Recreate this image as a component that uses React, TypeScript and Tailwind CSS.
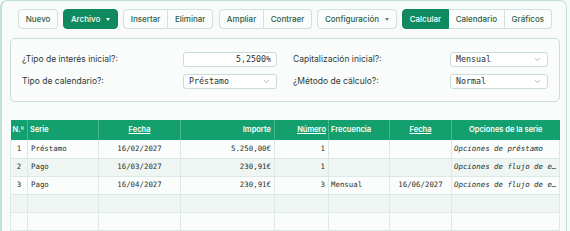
import { ChevronDown } from "lucide-react";

const sans = { fontFamily: "Inter, 'Noto Sans', sans-serif" };
const mono = { fontFamily: "'DejaVu Sans Mono', monospace" };

const rows = [
  { n: "1", serie: "Préstamo", fecha: "16/02/2027", importe: "5.250,00€", numero: "1", frec: "", fecha2: "", opc: "Opciones de préstamo" },
  { n: "2", serie: "Pago", fecha: "16/03/2027", importe: "230,91€", numero: "1", frec: "", fecha2: "", opc: "Opciones de flujo de efectivo" },
  { n: "3", serie: "Pago", fecha: "16/04/2027", importe: "230,91€", numero: "3", frec: "Mensual", fecha2: "16/06/2027", opc: "Opciones de flujo de efectivo" },
  null,
  null,
  null,
];

function Caret({ light }: { light?: boolean }) {
  return (
    <svg width="4" height="3" viewBox="0 0 4 3" className={light ? "fill-white" : "fill-[#6b7c76]"}>
      <path d="M0 0h4L2 3z" />
    </svg>
  );
}

function Btn({ label, primary, caret, first, last, single }: { label: string; primary?: boolean; caret?: boolean; first?: boolean; last?: boolean; single?: boolean }) {
  const rounded = single ? "rounded-[4px]" : first ? "rounded-l-[4px]" : last ? "rounded-r-[4px]" : "";
  const border = single || first ? "border" : "border border-l-0";
  const tone = primary
    ? "bg-[#0f8a5f] border-[#0f8a5f] text-white"
    : "bg-[#fbfdfc] border-[#cfe2db] text-[#2c5d4b]";
  return (
    <button className={`flex h-[20px] items-center gap-[6px] px-[6.75px] text-[8px] font-medium ${border} ${rounded} ${tone}`}>
      {label}
      {caret && <Caret light={primary} />}
    </button>
  );
}

function Field({ label, value, select, right }: { label: string; value: string; select?: boolean; right?: boolean }) {
  return (
    <div className="flex h-[15px] items-center justify-between">
      <span className="text-[8.5px] text-[#2f3a36]">{label}</span>
      <div
        className={`flex h-[15px] items-center rounded-[3px] border border-[#c9ddd6] bg-white px-[5px] text-[8.3px] text-[#2b2f2e] ${right ? "w-[98px]" : "w-[94px]"} ${select ? "justify-between" : "justify-end"}`}
        style={mono}
      >
        <span>{value}</span>
        {select && <ChevronDown className="h-[9px] w-[9px] text-[#7a8a84]" strokeWidth={1.6} />}
      </div>
    </div>
  );
}

export default function App() {
  return (
    <div className="h-[231px] w-[570px] overflow-hidden bg-[#f6faf9]" style={sans}>
      <div className="h-[240px] w-[567px] rounded-[7px] border border-l-2 border-[#bfe0d5] bg-[#f8fbfa] pl-[8px] pt-[8px]">
        <div className="flex items-center gap-[5px] pl-[8px]">
          <Btn label="Nuevo" single />
          <Btn label="Archivo" primary caret single />
          <div className="flex">
            <Btn label="Insertar" first />
            <Btn label="Eliminar" last />
          </div>
          <div className="ml-[1px] flex">
            <Btn label="Ampliar" first />
            <Btn label="Contraer" last />
          </div>
          <Btn label="Configuración" caret single />
          <div className="flex">
            <Btn label="Calcular" primary first />
            <Btn label="Calendario" />
            <Btn label="Gráficos" last />
          </div>
        </div>

        <div className="mt-[9px] grid w-[550px] grid-cols-2 gap-x-[16px] gap-y-[7px] rounded-[5px] border border-[#c3e0d6] bg-[#f9fcfb] px-[11px] pb-[12px] pt-[13px]">
          <Field label="¿Tipo de interés inicial?:" value="5,2500%" />
          <Field label="Capitalización inicial?:" value="Mensual" select right />
          <Field label="Tipo de calendario?:" value="Préstamo" select />
          <Field label="¿Método de cálculo?:" value="Normal" select right />
        </div>

        <table className="mt-[18px] w-[549px] table-fixed border-collapse">
          <colgroup>
            <col className="w-[17px]" />
            <col className="w-[71px]" />
            <col className="w-[82px]" />
            <col className="w-[94px]" />
            <col className="w-[54px]" />
            <col className="w-[61px]" />
            <col className="w-[62px]" />
            <col className="w-[108px]" />
          </colgroup>
          <thead>
            <tr className="h-[20px] bg-[#13a06e] text-[7.5px] text-white">
              <th className="border-r border-[#45b98e] px-[2px] text-left font-semibold">N.º</th>
              <th className="border-r border-[#45b98e] px-[2px] text-left font-semibold">Serie</th>
              <th className="border-r border-[#45b98e] px-[2px] text-center font-semibold underline">Fecha</th>
              <th className="border-r border-[#45b98e] px-[3px] text-right font-semibold">Importe</th>
              <th className="border-r border-[#45b98e] px-[2px] text-right font-semibold underline">Número</th>
              <th className="border-r border-[#45b98e] px-[2px] text-left font-semibold">Frecuencia</th>
              <th className="border-r border-[#45b98e] px-[2px] text-center font-semibold underline">Fecha</th>
              <th className="px-[2px] text-center font-semibold">Opciones de la serie</th>
            </tr>
          </thead>
          <tbody className="text-[7.4px] text-[#2b2f2e]" style={mono}>
            {rows.map((r, i) => (
              <tr key={i} className={`h-[18px] border-b border-[#dde9e5] ${i % 2 === 1 ? "bg-[#eef5f2]" : "bg-[#fbfdfc]"}`}>
                <td className="border-x border-[#dde9e5] text-center">{r?.n}</td>
                <td className="border-r border-[#dde9e5] px-[3px]">{r?.serie}</td>
                <td className="border-r border-[#dde9e5] text-center">{r?.fecha}</td>
                <td className="border-r border-[#dde9e5] px-[3px] text-right">{r?.importe}</td>
                <td className="border-r border-[#dde9e5] px-[3px] text-right">{r?.numero}</td>
                <td className="border-r border-[#dde9e5] px-[2px]">{r?.frec}</td>
                <td className="border-r border-[#dde9e5] text-center">{r?.fecha2}</td>
                <td className="truncate border-r border-[#dde9e5] px-[2px] italic">{r?.opc}</td>
              </tr>
            ))}
          </tbody>
        </table>
      </div>
    </div>
  );
}
